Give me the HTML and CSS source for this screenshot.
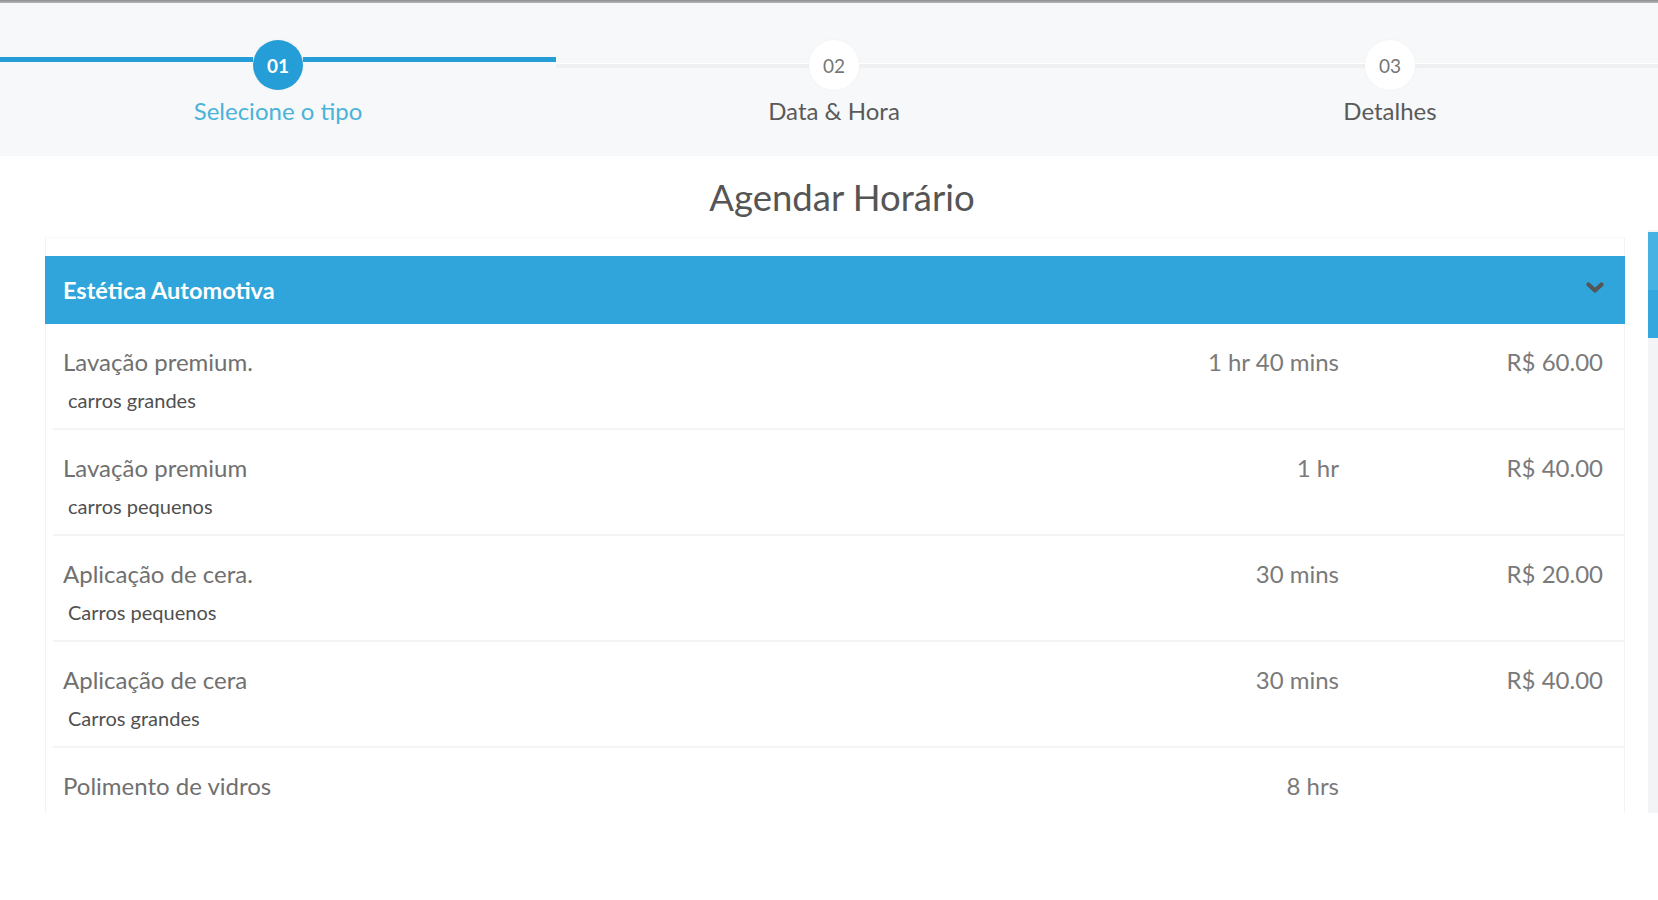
FILE: index.html
```html
<!DOCTYPE html>
<html lang="pt">
<head>
<meta charset="utf-8">
<title>Agendar Horário</title>
<link rel="stylesheet" href="styles.css">
</head>
<body>
<div class="topbar"></div>
<header class="steps">
  <div class="step active">
    <div class="track">
      <span class="line"></span>
      <span class="dot">01</span>
      <span class="line"></span>
    </div>
    <div class="label">Selecione o tipo</div>
  </div>
  <div class="step">
    <div class="track">
      <span class="line"></span>
      <span class="dot">02</span>
      <span class="line"></span>
    </div>
    <div class="label">Data &amp; Hora</div>
  </div>
  <div class="step">
    <div class="track">
      <span class="line"></span>
      <span class="dot">03</span>
      <span class="line"></span>
    </div>
    <div class="label">Detalhes</div>
  </div>
</header>

<h1 class="title">Agendar Horário</h1>

<div class="list-wrap">
  <div class="scroller">
    <section class="card">
      <div class="card-head">
        <span>Estética Automotiva</span>
        <svg class="chev" width="18" height="12" viewBox="0 0 18 12"><polyline points="2.5,2.5 9,8.5 15.5,2.5" fill="none" stroke="#555" stroke-width="4.2" stroke-linecap="round" stroke-linejoin="round"/></svg>
      </div>
      <div class="row">
        <div class="info"><div class="name">Lavação premium.</div><div class="sub">carros grandes</div></div>
        <div class="dur">1 hr 40 mins</div>
        <div class="price">R$ 60.00</div>
      </div>
      <div class="row">
        <div class="info"><div class="name">Lavação premium</div><div class="sub">carros pequenos</div></div>
        <div class="dur">1 hr</div>
        <div class="price">R$ 40.00</div>
      </div>
      <div class="row">
        <div class="info"><div class="name">Aplicação de cera.</div><div class="sub">Carros pequenos</div></div>
        <div class="dur">30 mins</div>
        <div class="price">R$ 20.00</div>
      </div>
      <div class="row">
        <div class="info"><div class="name">Aplicação de cera</div><div class="sub">Carros grandes</div></div>
        <div class="dur">30 mins</div>
        <div class="price">R$ 40.00</div>
      </div>
      <div class="row">
        <div class="info"><div class="name">Polimento de vidros</div><div class="sub">&nbsp;</div></div>
        <div class="dur">8 hrs</div>
        <div class="price"></div>
      </div>
    </section>
  </div>
  <div class="scrollbar"><div class="thumb"></div></div>
</div>
</body>
</html>
```

FILE: styles.css
```css
html, body {
  margin: 0;
  padding: 0;
  background: #ffffff;
  overflow: hidden;
  width: 1658px;
  height: 900px;
}
body {
  font-family: Lato, "Open Sans", "Liberation Sans", sans-serif;
  color: #666;
}
.topbar {
  height: 3px;
  background: linear-gradient(#8c8c8c, #b8b8b8);
}
.steps {
  display: grid;
  grid-template-columns: repeat(3, 556px);
  background: #f7f8f9;
  height: 153px;
  box-sizing: border-box;
  padding-top: 36px;
}
.step {
  display: flex;
  flex-direction: column;
  align-items: center;
}
.track {
  width: 100%;
  height: 52px;
  display: flex;
  align-items: center;
}
.line {
  flex: 1;
  height: 4px;
  background: #eef0f1;
  border-top: 1px solid #ffffff;
}
.step.active .line {
  height: 5px;
  border-top: 0;
  background: #259dd6;
  margin-top: -11px;
}
.dot {
  width: 50px;
  height: 50px;
  border-radius: 50%;
  display: flex;
  align-items: center;
  justify-content: center;
  background: #ffffff;
  color: #777;
  font-size: 19px;
  box-shadow: 0 0 4px rgba(0,0,0,0.03);
}
.step.active .dot {
  background: #259dd6;
  color: #ffffff;
  font-weight: 700;
}
.label {
  margin-top: 5px;
  font-size: 24px;
  line-height: 30px;
  color: #5a5a5a;
}
.step.active .label {
  color: #49b3d8;
}
.title {
  margin: 0;
  height: 74px;
  box-sizing: border-box;
  padding-top: 8px;
  padding-left: 26px;
  display: flex;
  align-items: center;
  justify-content: center;
  font-weight: 400;
  font-size: 36.5px;
  color: #555;
}
.list-wrap {
  display: flex;
  height: 583px;
}
.scroller {
  flex: 1;
  overflow: hidden;
  padding: 7px 23px 0 45px;
}
.card {
  border: 1px solid #f3f3f3;
  border-top-color: #f9f9f9;
  border-bottom: 0;
  padding-top: 18px;
  min-height: 100%;
  box-sizing: border-box;
}
.card-head {
  height: 68px;
  margin: 0 -1px;
  background: #2fa5dc;
  display: flex;
  align-items: center;
  justify-content: space-between;
  padding: 0 21px 0 18px;
  color: #fff;
  font-weight: 700;
  font-size: 23.5px;
}
.chev {
  margin-top: -4px;
}
.row {
  display: grid;
  grid-template-columns: 1fr 260px 264px;
  height: 106px;
  box-sizing: border-box;
  padding: 23px 21px 0 17px;
  margin-left: 7px;
  border-bottom: 2px solid #f4f4f4;
  font-size: 24px;
  line-height: 30px;
  color: #707070;
}
.row .info {
  margin-left: -7px;
}
.sub {
  margin-top: 10px;
  padding-left: 5px;
  font-size: 20px;
  line-height: 26px;
  color: #505050;
}
.dur, .price {
  text-align: right;
  color: #7a7a7a;
}
.scrollbar {
  width: 10px;
  background: #f3f4f5;
}
.thumb {
  height: 106px;
  margin-top: 2px;
  background: linear-gradient(#45b2e3 0 55%, #34a7de 55% 100%);
}
```
